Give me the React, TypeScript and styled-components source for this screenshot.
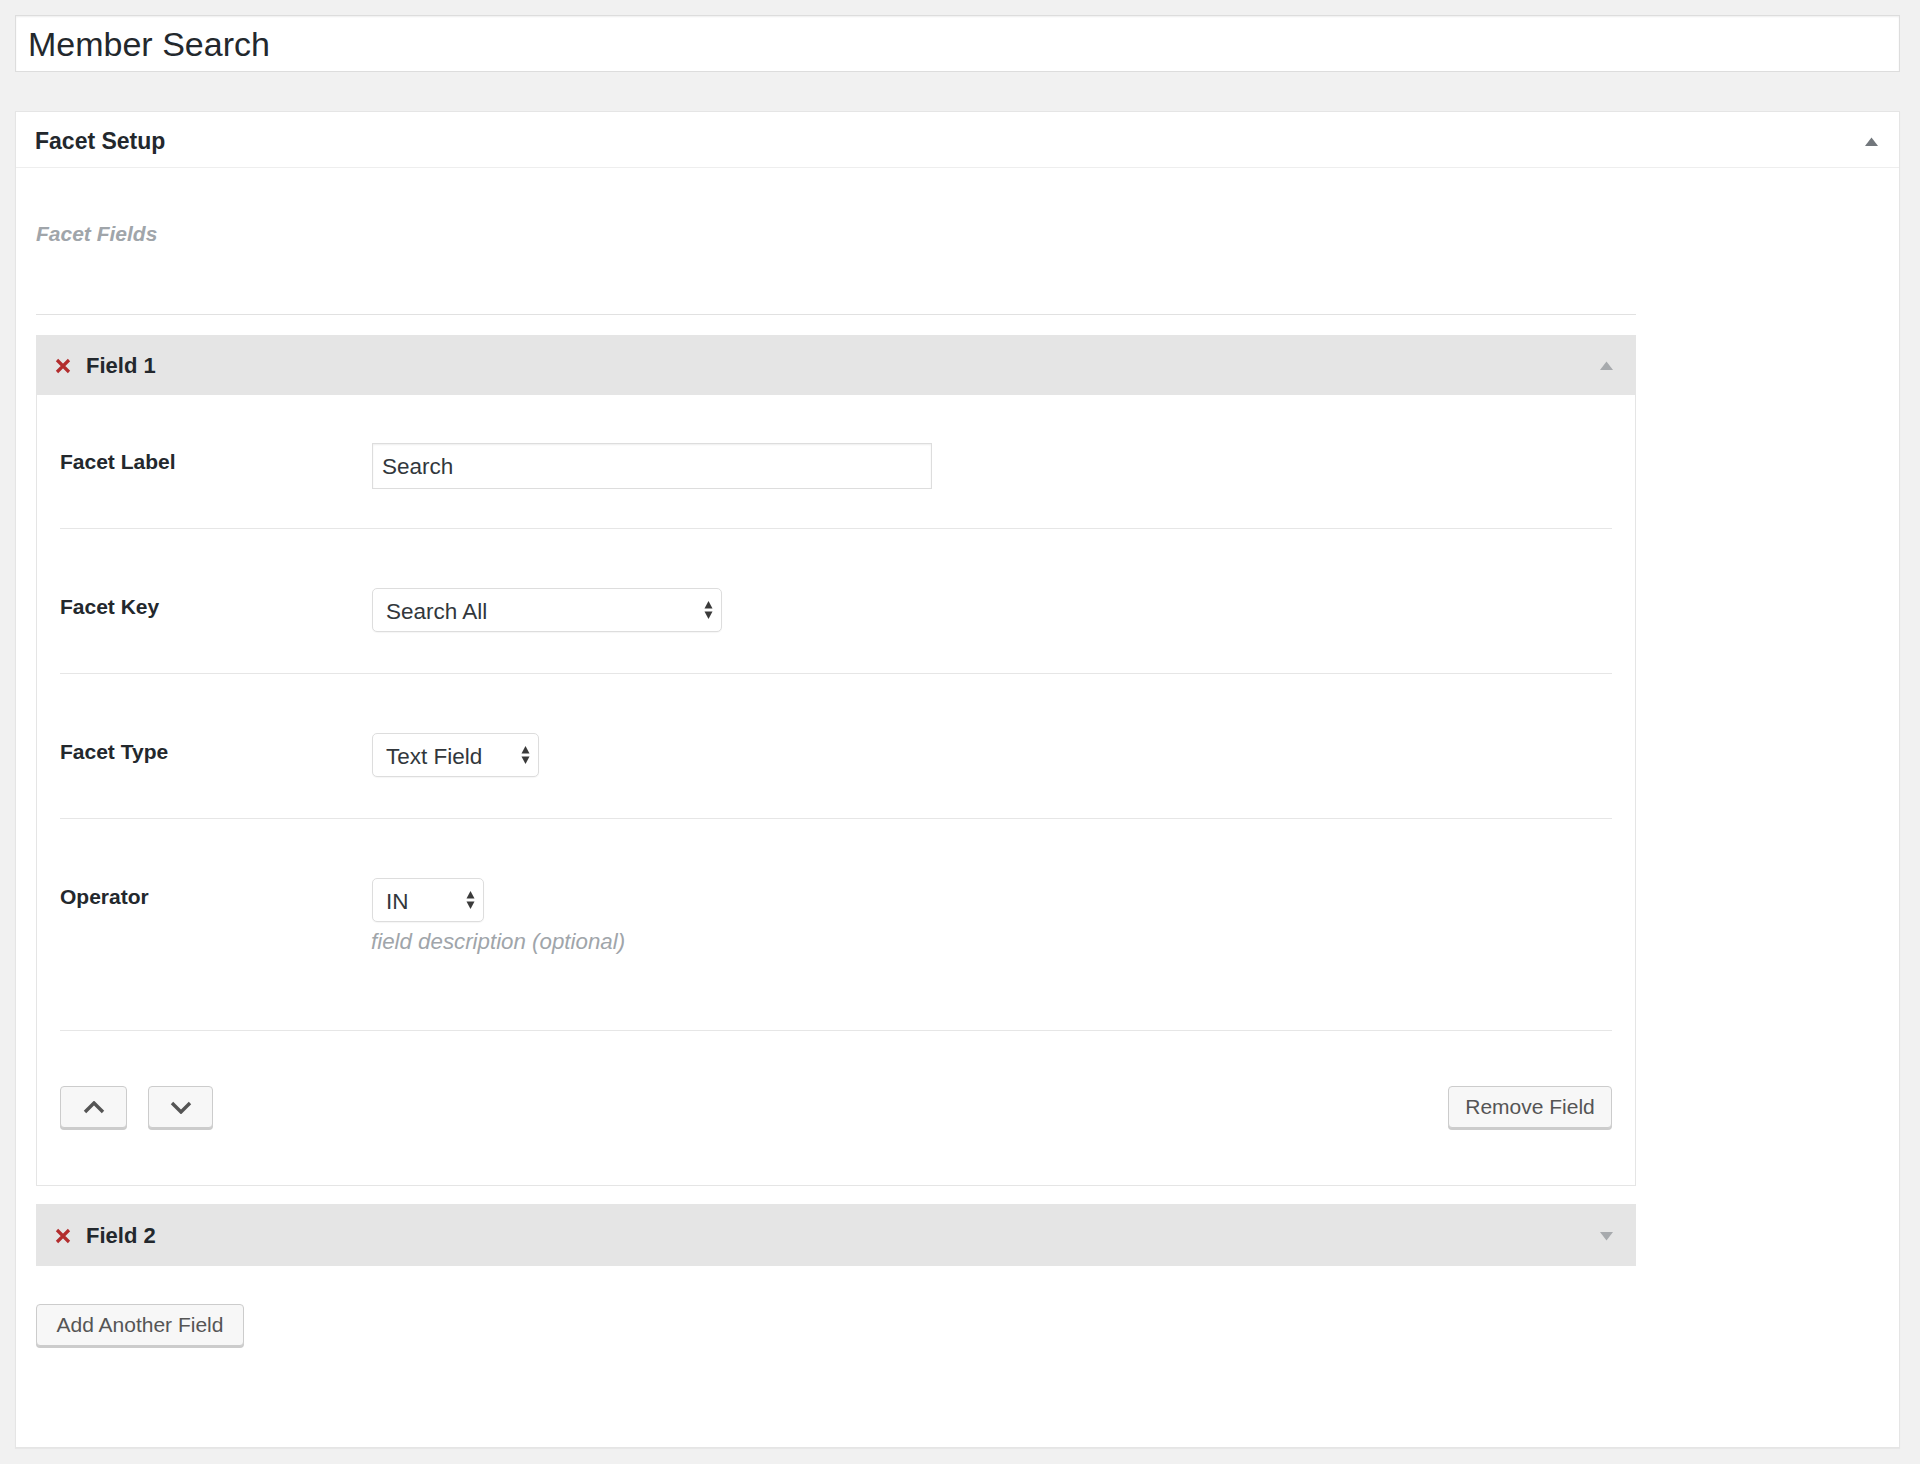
import React from 'react';
import styled, { createGlobalStyle } from 'styled-components';

const GlobalStyle = createGlobalStyle`
  body {
    margin: 0;
    background: #f1f1f1;
    font-family: "Liberation Sans", Arial, sans-serif;
    color: #23282d;
  }
  * { box-sizing: border-box; }
`;

const CloseIcon = () => (
  <svg width="16" height="16" viewBox="0 0 16 16">
    <path d="M2 2 L14 14 M14 2 L2 14" stroke="#b32d2e" strokeWidth="3.2" />
  </svg>
);

const Triangle = ({ down, color }: { down?: boolean; color: string }) => (
  <svg width="13" height="10" viewBox="0 0 13 10">
    {down ? <polygon points="0,1 13,1 6.5,9.5" fill={color} /> : <polygon points="0,9 13,9 6.5,0.5" fill={color} />}
  </svg>
);

const SelectArrows = () => (
  <svg width="9" height="20" viewBox="0 0 9 20">
    <polygon points="0.5,8.5 4.5,1 8.5,8.5" fill="#3a3a3a" />
    <polygon points="0.5,11.5 4.5,19 8.5,11.5" fill="#3a3a3a" />
  </svg>
);

const Chevron = ({ down }: { down?: boolean }) => (
  <svg width="22" height="13" viewBox="0 0 22 13">
    <path d={down ? 'M2 2 L11 11 L20 2' : 'M2 11 L11 2 L20 11'} stroke="#555" strokeWidth="3.4" fill="none" />
  </svg>
);

function App() {
  return (
    <Page>
      <GlobalStyle />
      <TitleInput defaultValue="Member Search" />
      <Postbox>
        <PostboxHeader>
          <PostboxTitle>Facet Setup</PostboxTitle>
          <Triangle color="#72777c" />
        </PostboxHeader>
        <PostboxInside>
          <SectionTitle>Facet Fields</SectionTitle>
          <Divider />
          <FieldList>
            <FieldHeader>
              <CloseIcon />
              <FieldTitle>Field 1</FieldTitle>
              <Toggle>
                <Triangle color="#a7aaad" />
              </Toggle>
            </FieldHeader>
            <FieldBody>
              <FieldRow $first>
                <RowLabel>Facet Label</RowLabel>
                <Control>
                  <TextInput defaultValue="Search" />
                </Control>
              </FieldRow>
              <FieldRow>
                <RowLabel>Facet Key</RowLabel>
                <Control>
                  <SelectWrap>
                    <Select $w={350} defaultValue="all">
                      <option value="all">Search All</option>
                    </Select>
                    <ArrowSlot><SelectArrows /></ArrowSlot>
                  </SelectWrap>
                </Control>
              </FieldRow>
              <FieldRow>
                <RowLabel>Facet Type</RowLabel>
                <Control>
                  <SelectWrap>
                    <Select $w={167} defaultValue="text">
                      <option value="text">Text Field</option>
                    </Select>
                    <ArrowSlot><SelectArrows /></ArrowSlot>
                  </SelectWrap>
                </Control>
              </FieldRow>
              <FieldRow>
                <RowLabel>Operator</RowLabel>
                <Control>
                  <SelectWrap>
                    <Select $w={112} defaultValue="in">
                      <option value="in">IN</option>
                    </Select>
                    <ArrowSlot><SelectArrows /></ArrowSlot>
                  </SelectWrap>
                  <Description>field description (optional)</Description>
                </Control>
              </FieldRow>
              <ButtonRow>
                <Button $w={67}><Chevron /></Button>
                <Button $w={65}><Chevron down /></Button>
                <RemoveButton $w={164}>Remove Field</RemoveButton>
              </ButtonRow>
            </FieldBody>
            <FieldHeader $spaced>
              <CloseIcon />
              <FieldTitle>Field 2</FieldTitle>
              <Toggle>
                <Triangle down color="#a7aaad" />
              </Toggle>
            </FieldHeader>
          </FieldList>
          <AddButton $w={208}>Add Another Field</AddButton>
        </PostboxInside>
      </Postbox>
    </Page>
  );
}

const Page = styled.div`
  min-height: 100vh;
  padding: 15px 20px 18px 15px;
  display: flex;
  flex-direction: column;
`

const TitleInput = styled.input`
  width: 100%;
  height: 57px;
  padding: 2px 12px 0;
  border: 1px solid #ddd;
  box-shadow: inset 0 1px 2px rgba(0, 0, 0, 0.07);
  background: #fff;
  font-family: inherit;
  font-size: 34px;
  color: #23282d;
  outline: none;
`

const Postbox = styled.div`
  margin-top: 39px;
  background: #fff;
  border: 1px solid #e5e5e5;
  box-shadow: 0 1px 1px rgba(0, 0, 0, 0.04);
`

const PostboxHeader = styled.div`
  height: 56px;
  display: flex;
  align-items: center;
  justify-content: space-between;
  padding: 4px 21px 0 19px;
  border-bottom: 1px solid #eee;
`

const PostboxTitle = styled.h2`
  margin: 0;
  font-size: 23px;
  font-weight: 700;
  color: #23282d;
`

const PostboxInside = styled.div`
  padding: 0 20px 99px;
  display: flex;
  flex-direction: column;
  align-items: flex-start;
`

const SectionTitle = styled.h3`
  margin: 52px 0 0;
  font-size: 21px;
  line-height: 28px;
  font-style: italic;
  font-weight: 700;
  color: #a0a5aa;
`

const Divider = styled.hr`
  width: 1600px;
  margin: 66px 0 0;
  border: 0;
  border-top: 1px solid #e1e1e1;
`

const FieldList = styled.div`
  width: 1600px;
  margin-top: 20px;
`

const FieldHeader = styled.div<{ $spaced?: boolean }>`
  height: ${p => (p.$spaced ? 62 : 60)}px;
  margin-top: ${p => (p.$spaced ? 18 : 0)}px;
  display: flex;
  align-items: center;
  gap: 15px;
  padding: 1px 23px 0 19px;
  background: #e5e5e5;
`

const FieldTitle = styled.span`
  font-size: 22px;
  font-weight: 700;
  color: #23282d;
`

const Toggle = styled.span`
  margin-left: auto;
  display: flex;
`

const FieldBody = styled.div`
  padding: 0 23px;
  border: 1px solid #e5e5e5;
  border-top: 0;
  background: #fff;
`

const FieldRow = styled.div<{ $first?: boolean }>`
  display: flex;
  align-items: flex-start;
  padding: ${p => (p.$first ? '48px 0 39px' : '59px 0 41px')};
  border-bottom: 1px solid #e6e6e6;
`

const RowLabel = styled.label`
  width: 312px;
  flex-shrink: 0;
  padding-top: 4px;
  font-size: 21px;
  line-height: 29px;
  font-weight: 700;
  color: #23282d;
`

const Control = styled.div`
  display: flex;
  flex-direction: column;
  align-items: flex-start;
`

const TextInput = styled.input`
  width: 560px;
  height: 46px;
  padding: 2px 9px 0;
  border: 1px solid #ddd;
  box-shadow: inset 0 1px 2px rgba(0, 0, 0, 0.07);
  font-family: inherit;
  font-size: 22.5px;
  color: #32373c;
  outline: none;
`

const SelectWrap = styled.div`
  position: relative;
  display: inline-flex;
`

const Select = styled.select<{ $w: number }>`
  width: ${p => p.$w}px;
  height: 44px;
  padding: 2px 34px 0 13px;
  border: 1px solid #ddd;
  border-radius: 5px;
  background: #fff;
  box-shadow: 0 1px 1px rgba(0, 0, 0, 0.04);
  appearance: none;
  font-family: inherit;
  font-size: 22.5px;
  color: #32373c;
  outline: none;
`

const ArrowSlot = styled.span`
  position: absolute;
  right: 9px;
  top: 50%;
  transform: translateY(-50%);
  display: flex;
  pointer-events: none;
`

const Description = styled.p`
  margin: 5px 0 32px -1px;
  font-size: 22.3px;
  line-height: 30px;
  font-style: italic;
  color: #a0a5aa;
`

const ButtonRow = styled.div`
  display: flex;
  align-items: center;
  gap: 21px;
  padding: 55px 0 55px;
`

const Button = styled.button<{ $w: number }>`
  width: ${p => p.$w}px;
  height: 42px;
  margin-bottom: 2px;
  padding: 0;
  display: inline-flex;
  align-items: center;
  justify-content: center;
  border: 1px solid #ccc;
  border-radius: 4px;
  background: #f7f7f7;
  box-shadow: 0 2px 0 #ccc;
  font-family: inherit;
  font-size: 21px;
  color: #555;
  cursor: pointer;
`

const RemoveButton = styled(Button)`
  margin-left: auto;
`

const AddButton = styled(Button)`
  margin-top: 38px;
`

export default App;
